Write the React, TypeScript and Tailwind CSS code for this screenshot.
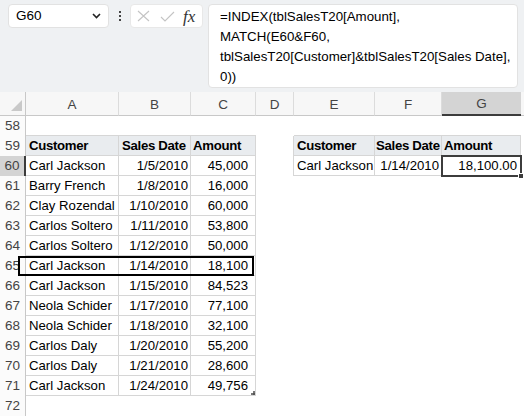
import React from "react";

type Row = {
  n: number;
  a?: string;
  b?: string;
  c?: string;
  kind: "empty" | "hdr" | "data";
  small?: "hdr" | "data";
};

const data: [string, string, string][] = [
  ["Carl Jackson", "1/5/2010", "45,000"],
  ["Barry French", "1/8/2010", "16,000"],
  ["Clay Rozendal", "1/10/2010", "60,000"],
  ["Carlos Soltero", "1/11/2010", "53,800"],
  ["Carlos Soltero", "1/12/2010", "50,000"],
  ["Carl Jackson", "1/14/2010", "18,100"],
  ["Carl Jackson", "1/15/2010", "84,523"],
  ["Neola Schider", "1/17/2010", "77,100"],
  ["Neola Schider", "1/18/2010", "32,100"],
  ["Carlos Daly", "1/20/2010", "55,200"],
  ["Carlos Daly", "1/21/2010", "28,600"],
  ["Carl Jackson", "1/24/2010", "49,756"],
];

const rows: Row[] = [
  { n: 58, kind: "empty" },
  { n: 59, kind: "hdr", small: "hdr" },
  ...data.map((d, i) => ({
    n: 60 + i,
    a: d[0],
    b: d[1],
    c: d[2],
    kind: "data" as const,
    small: i === 0 ? ("data" as const) : undefined,
  })),
  { n: 72, kind: "empty" },
];

function Cols() {
  const cols: [string, string, boolean][] = [
    ["A", "w-[93px]", false],
    ["B", "w-[72px]", false],
    ["C", "w-[65px]", false],
    ["D", "w-[38px]", false],
    ["E", "w-[81px]", false],
    ["F", "w-[67px]", false],
    ["G", "w-[79px]", true],
  ];
  return (
    <div className="flex h-[24px] bg-[#f7f7f7]">
      <div className="w-[26px] h-full border-r border-b border-[#c8c8c8] relative shrink-0">
        <svg className="absolute left-[11px] top-[8px]" width="11" height="11" viewBox="0 0 11 11">
          <polygon points="11,0 11,11 0,11" fill="#c9c9c9" />
        </svg>
      </div>
      {cols.map(([l, w, sel]) =>
        sel ? (
          <div
            key={l}
            className={`${w} shrink-0 h-full bg-[#d4d4d4] border-b-2 border-[#3c3c3c] flex items-center justify-center pt-[3px] text-[13.5px] text-[#444]`}
          >
            {l}
          </div>
        ) : (
          <div
            key={l}
            className={`${w} shrink-0 h-full border-r border-b border-[#dcdcdc] border-b-[#c8c8c8] flex items-center justify-center pt-[3px] text-[13.5px] text-[#444]`}
          >
            {l}
          </div>
        )
      )}
      <div className="flex-1 h-full border-b border-[#c8c8c8]" />
    </div>
  );
}

const B = "border-[#d6d6d6]";

function GridRow({ r }: { r: Row }) {
  const isSelRow = r.n === 60;
  const inTable = r.kind !== "empty";
  const above = r.n === 58;
  const hdrBg = r.kind === "hdr" ? "bg-[#e9ecef] font-bold tracking-[-0.3px]" : "";
  const cellBase = "shrink-0 h-full flex items-center whitespace-nowrap overflow-hidden text-[13.2px] text-black";
  const tcell = inTable ? `border-r border-b ${B} ${hdrBg}` : above ? `border-b ${B}` : "";
  const smallIn = !!r.small;
  const shdr = r.small === "hdr" ? "bg-[#e9ecef] font-bold tracking-[-0.3px]" : "";
  const scell = smallIn ? `border-r border-b ${B} ${shdr}` : above ? `border-b ${B}` : "";
  return (
    <div className="flex h-[20px] relative">
      {isSelRow ? (
        <div className="w-[26px] shrink-0 h-full bg-[#d4d4d4] border-r-2 border-[#3c3c3c] flex items-center justify-center text-[13.5px] text-[#444]">
          {r.n}
        </div>
      ) : (
        <div className="w-[26px] shrink-0 h-full bg-[#fbfbfb] border-r border-[#c8c8c8] flex items-center justify-center text-[13.5px] text-[#444]">
          {r.n}
        </div>
      )}
      <div className={`${cellBase} w-[93px] pl-[3px] ${tcell}`}>{r.kind === "hdr" ? "Customer" : r.a}</div>
      <div className={`${cellBase} w-[72px] ${r.kind === "hdr" ? "pl-[3px]" : "justify-end pr-[2px]"} ${tcell}`}>
        {r.kind === "hdr" ? "Sales Date" : r.b}
      </div>
      <div className={`${cellBase} w-[65px] ${r.kind === "hdr" ? "pl-[2px]" : "justify-end pr-[7px]"} ${tcell} relative`}>
        {r.kind === "hdr" ? "Amount" : r.c}
        {r.n === 71 && (
          <svg className="absolute right-[0px] bottom-[0px]" width="4" height="4" viewBox="0 0 4 4">
            <rect x="2" y="0" width="2" height="2" fill="#777" />
            <rect x="0" y="2" width="2" height="2" fill="#777" />
            <rect x="2" y="2" width="2" height="2" fill="#555" />
          </svg>
        )}
      </div>
      <div className={`${cellBase} w-[38px] ${smallIn ? `border-r ${B}` : ""}`} />
      <div className={`${cellBase} w-[81px] pl-[3px] ${scell}`}>
        {r.small === "hdr" ? "Customer" : r.small === "data" ? "Carl Jackson" : ""}
      </div>
      <div className={`${cellBase} w-[67px] ${r.small === "data" ? "justify-end pr-[2px]" : "pl-[1px]"} ${scell}`}>
        {r.small === "hdr" ? "Sales Date" : r.small === "data" ? "1/14/2010" : ""}
      </div>
      <div className={`${cellBase} w-[79px] ${r.small === "data" ? "justify-end pr-[3px]" : "pl-[2px]"} ${scell}`}>
        {r.small === "hdr" ? "Amount" : r.small === "data" ? "18,100.00" : ""}
      </div>
      {r.small === "data" && (
        <>
          <div className="absolute left-[441px] top-[-1px] w-[81px] h-[22px] border-2 border-[#3c3c3c] pointer-events-none" />
          <div className="absolute left-[518px] top-[17px] w-[6px] h-[6px] bg-[#3c3c3c] border border-white" />
        </>
      )}
      {r.n === 65 && (
        <div className="absolute left-[18px] top-0 w-[236px] h-[20px] border-2 border-black pointer-events-none" />
      )}
    </div>
  );
}

export default function App() {
  return (
    <div
      className="w-[524px] h-[418px] overflow-hidden bg-white relative"
      style={{ fontFamily: '"Liberation Sans", Arial, sans-serif' }}
    >
      {/* formula bar */}
      <div className="h-[92px] bg-[#eff1f3] flex items-start pt-[4px] pl-[8px]">
        <div className="w-[101px] h-[24px] bg-white rounded-[4px] border border-[#e2e2e2] flex items-center pl-[7px] pr-[7px] justify-between">
          <span className="text-[13.5px] text-black">G60</span>
          <svg width="9" height="6" viewBox="0 0 9 6">
            <path d="M1 1 L4.5 4.5 L8 1" stroke="#222" strokeWidth="1.6" fill="none" />
          </svg>
        </div>
        <div className="w-[21px] h-[24px] flex flex-col items-center justify-center gap-[2px]">
          <div className="w-[2px] h-[2px] bg-[#444]" />
          <div className="w-[2px] h-[2px] bg-[#444]" />
          <div className="w-[2px] h-[2px] bg-[#444]" />
        </div>
        <div className="w-[73px] h-[24px] bg-white rounded-[4px] border border-[#e8e8e8] flex items-center pl-[6px]">
          <svg width="13" height="12" viewBox="0 0 13 12">
            <path d="M1 1 L12 11 M12 1 L1 11" stroke="#c4c4c4" strokeWidth="1.1" fill="none" />
          </svg>
          <svg className="ml-[10px]" width="15" height="11" viewBox="0 0 15 11">
            <path d="M1 6 L5 10 L14 1" stroke="#c4c4c4" strokeWidth="1.1" fill="none" />
          </svg>
          <span
            className="ml-[8px] text-[17px] italic text-[#333] leading-none"
            style={{ fontFamily: '"Liberation Serif", "Times New Roman", serif' }}
          >
            fx
          </span>
        </div>
        <div className="ml-[5px] w-[310px] h-[84px] bg-white rounded-[4px] border border-[#e2e2e2] pl-[11px] pt-[2px] text-[13.3px] leading-[20px] text-black">
          <div>=INDEX(tblSalesT20[Amount],</div>
          <div>MATCH(E60&amp;F60,</div>
          <div>tblSalesT20[Customer]&amp;tblSalesT20[Sales Date],</div>
          <div>0))</div>
        </div>
      </div>
      <Cols />
      {rows.map((r) => (
        <GridRow key={r.n} r={r} />
      ))}
    </div>
  );
}
